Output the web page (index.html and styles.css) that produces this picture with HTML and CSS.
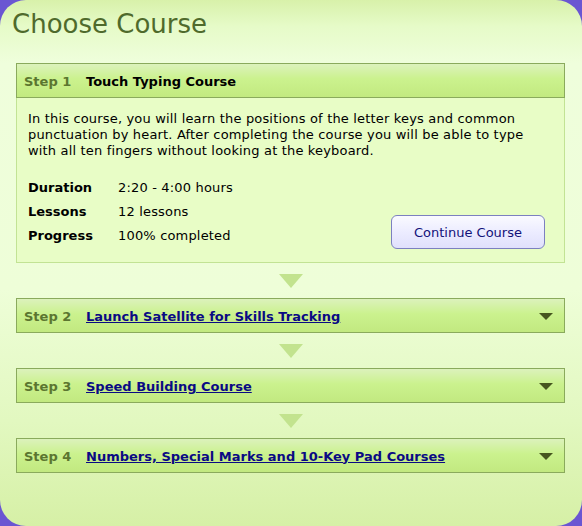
FILE: index.html
```html
<!DOCTYPE html>
<html>
<head>
<meta charset="utf-8">
<link rel="stylesheet" href="styles.css">
</head>
<body>
<div class="panel">
  <h1 class="title">Choose Course</h1>
  <div class="steps">
    <section class="step open">
      <div class="step-head">
        <span class="step-num">Step 1</span>
        <span class="step-name">Touch Typing Course</span>
      </div>
      <div class="step-body">
        <p class="desc">In this course, you will learn the positions of the letter keys and common punctuation by heart. After completing the course you will be able to type with all ten fingers without looking at the keyboard.</p>
        <div class="details">
          <dl class="facts">
            <div class="fact"><dt>Duration</dt><dd>2:20 - 4:00 hours</dd></div>
            <div class="fact"><dt>Lessons</dt><dd>12 lessons</dd></div>
            <div class="fact"><dt>Progress</dt><dd>100% completed</dd></div>
          </dl>
          <button class="btn">Continue Course</button>
        </div>
      </div>
    </section>
    <div class="connector"><span class="tri"></span></div>
    <section class="step">
      <div class="step-head">
        <span class="step-num">Step 2</span>
        <a class="step-link" href="#">Launch Satellite for Skills Tracking</a>
        <span class="caret"></span>
      </div>
    </section>
    <div class="connector"><span class="tri"></span></div>
    <section class="step">
      <div class="step-head">
        <span class="step-num">Step 3</span>
        <a class="step-link" href="#">Speed Building Course</a>
        <span class="caret"></span>
      </div>
    </section>
    <div class="connector"><span class="tri"></span></div>
    <section class="step">
      <div class="step-head">
        <span class="step-num">Step 4</span>
        <a class="step-link" href="#">Numbers, Special Marks and 10-Key Pad Courses</a>
        <span class="caret"></span>
      </div>
    </section>
  </div>
</div>
</body>
</html>
```
FILE: styles.css
```css
html, body {
  margin: 0;
  padding: 0;
}
body {
  background: #6a56d2;
  font-family: "DejaVu Sans", Verdana, sans-serif;
  font-size: 13px;
  color: #000;
}
.panel {
  height: 526px;
  box-sizing: border-box;
  border-radius: 26px;
  background: linear-gradient(180deg, #d8f1aa 0%, #e6fbc8 5%, #effedc 12%, #eefed8 55%, #e2f8c0 80%, #d6f0a6 100%);
  padding: 0 17px 0 16px;
  overflow: hidden;
}
.title {
  margin: 0 0 0 -4px;
  padding: 7px 0 0 0;
  height: 63px;
  box-sizing: border-box;
  font-size: 26px;
  font-weight: normal;
  line-height: 34px;
  color: #4f6a2c;
}
.steps {
  display: flex;
  flex-direction: column;
}
.step-head {
  display: flex;
  align-items: center;
  height: 35px;
  box-sizing: border-box;
  border: 1px solid #8aaa5c;
  background: linear-gradient(180deg, #dcf2bc 0%, #cbf28e 45%, #c2e980 100%);
  padding: 1px 11px 0 7px;
  font-weight: bold;
}
.step-num {
  width: 62px;
  flex: none;
  color: #5b7630;
}
.step-name {
  color: #000;
}
.step-link {
  color: #0a0a84;
  text-decoration: underline;
}
.caret {
  margin-left: auto;
  width: 0;
  height: 0;
  border-left: 7px solid transparent;
  border-right: 7px solid transparent;
  border-top: 7px solid #46561f;
}
.step-body {
  background: #e8fdc6;
  border: 1px solid #c2e394;
  border-top: none;
  padding: 13px 19px 15px 11px;
}
.desc {
  margin: 0;
  line-height: 16px;
  letter-spacing: 0.17px;
}
.details {
  display: flex;
  align-items: flex-end;
  justify-content: space-between;
  margin-top: 16px;
}
.facts {
  margin: 0;
}
.fact {
  display: flex;
  height: 24px;
  align-items: center;
}
.fact dt {
  width: 90px;
  font-weight: bold;
}
.fact dd {
  margin: 0;
  letter-spacing: 0.17px;
}
.btn {
  width: 154px;
  height: 34px;
  margin-bottom: -2px;
  border: 1px solid #7c80c0;
  border-radius: 6px;
  background: linear-gradient(180deg, #fafaff 0%, #ececff 50%, #e0e0fc 100%);
  font-family: "DejaVu Sans", Verdana, sans-serif;
  font-size: 13px;
  color: #12127a;
  padding: 0;
}
.connector {
  height: 35px;
  display: flex;
  justify-content: center;
  align-items: center;
}
.tri {
  width: 0;
  height: 0;
  border-left: 12px solid transparent;
  border-right: 12px solid transparent;
  border-top: 14px solid #c2e38e;
}
```
